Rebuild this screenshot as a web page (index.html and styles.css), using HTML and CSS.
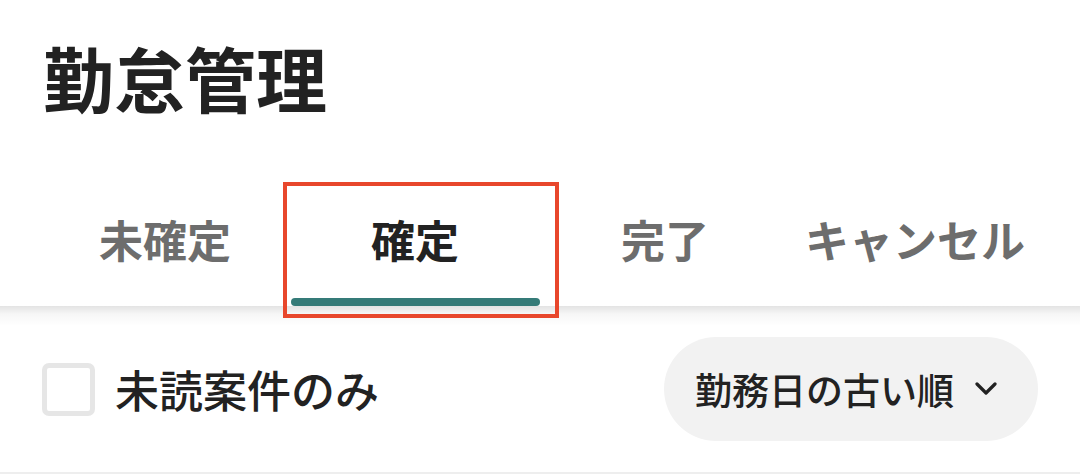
FILE: index.html
```html
<!DOCTYPE html>
<html lang="ja">
<head>
<meta charset="utf-8">
<title>勤怠管理</title>
<link rel="stylesheet" href="styles.css">
</head>
<body>
<header class="page-header">
  <h1 class="title">勤怠管理</h1>
</header>
<nav class="tabs">
  <div class="tab"><span class="tab-label">未確定</span><span class="tab-indicator"></span></div>
  <div class="tab tab-active"><span class="tab-label">確定</span><span class="tab-indicator"></span><span class="highlight-box"></span></div>
  <div class="tab"><span class="tab-label">完了</span><span class="tab-indicator"></span></div>
  <div class="tab"><span class="tab-label">キャンセル</span><span class="tab-indicator"></span></div>
</nav>
<section class="filter-row">
  <label class="unread">
    <span class="checkbox"></span>
    <span class="unread-label">未読案件のみ</span>
  </label>
  <button class="sort-button" type="button">
    <span class="sort-label">勤務日の古い順</span>
    <svg class="chevron" width="22" height="14" viewBox="0 0 22 14"><path d="M2 2 L11 11 L20 2" fill="none" stroke="#222" stroke-width="3.2" stroke-linecap="round" stroke-linejoin="round"/></svg>
  </button>
</section>
</body>
</html>
```

FILE: styles.css
```css
* { box-sizing: border-box; }
html, body { margin: 0; padding: 0; background: #fff; }
body {
  font-family: "Noto Sans CJK JP", "Noto Sans", sans-serif;
  color: #222;
  width: 1080px;
}
.page-header {
  padding: 40px 0 0 43px;
}
.title {
  margin: 0;
  font-size: 71px;
  line-height: 72px;
  font-weight: 700;
  color: #222;
}
.tabs {
  margin-top: 70px;
  display: flex;
  padding: 0 40px;
  height: 124px;
  position: relative;
  background: #fff;
  z-index: 1;
}
.tabs::after {
  content: "";
  position: absolute;
  left: 0;
  right: 0;
  top: 100%;
  height: 20px;
  background: linear-gradient(to bottom, rgba(0, 0, 0, 0.11), rgba(0, 0, 0, 0.035) 40%, rgba(0, 0, 0, 0));
  pointer-events: none;
}
.tab {
  position: relative;
  flex: 0 0 250px;
  display: flex;
  flex-direction: column;
  align-items: center;
  padding-top: 35px;
}
.tab-label {
  font-size: 44px;
  line-height: 44px;
  font-weight: 700;
  color: #6d6d6d;
}
.tab-active .tab-label { color: #222; }
.tab-indicator {
  margin-top: auto;
  width: 249px;
  margin-left: 1px;
  height: 8px;
  border-radius: 4px;
  background: transparent;
}
.tab-active .tab-indicator { background: #357b78; }
.highlight-box {
  position: absolute;
  left: -7px;
  right: -19px;
  top: 0;
  bottom: -12px;
  border: 4px solid #e8472c;
  pointer-events: none;
  z-index: 2;
}
.filter-row {
  height: 168px;
  display: flex;
  align-items: center;
  justify-content: space-between;
  padding: 0 42px 0 42px;
  border-bottom: 2px solid #eeeeee;
}
.unread {
  display: flex;
  align-items: center;
  gap: 20px;
}
.checkbox {
  width: 53px;
  height: 53px;
  border: 5px solid #e6e6e6;
  border-radius: 7px;
  background: #fff;
}
.unread-label {
  font-size: 44px;
  line-height: 44px;
  font-weight: 500;
  color: #222;
}
.sort-button {
  display: flex;
  align-items: center;
  width: 374px;
  height: 104px;
  border: none;
  border-radius: 52px;
  background: #f2f2f2;
  padding: 0 0 0 31px;
  font-family: inherit;
  cursor: pointer;
}
.sort-label {
  font-size: 37px;
  line-height: 37px;
  font-weight: 500;
  color: #222;
}
.chevron {
  margin-left: 21px;
}
```
